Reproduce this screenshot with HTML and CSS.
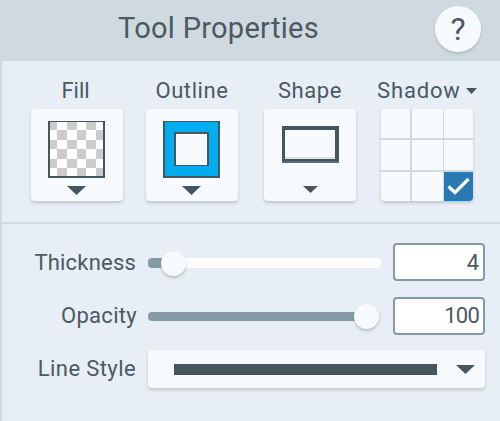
FILE: index.html
```html
<!DOCTYPE html>
<html lang="en">
<head>
<meta charset="utf-8">
<title>Tool Properties</title>
<link rel="stylesheet" href="styles.css">
</head>
<body>
<main class="panel">
  <header class="header">
    <h1 class="title">Tool Properties</h1>
    <button class="help">?</button>
  </header>
  <section class="swatches">
    <div class="tool">
      <span class="label label-fill">Fill</span>
      <button class="card" aria-label="Fill">
        <svg width="92" height="92" viewBox="0 0 92 92" shape-rendering="crispEdges">
          <path fill="#465660" d="M17 12h57v57H17z"/>
          <path fill="#fff" d="M19 13h53v54H19z"/>
          <path fill="#ccc" d="M19 13h7v8h-7zM36 13h10v8H36zM55 13h10v8H55zM26 21h10v10H26zM46 21h9v10h-9zM65 21h7v10h-7zM19 31h7v9h-7zM36 31h10v9H36zM55 31h10v9H55zM26 40h10v10H26zM46 40h9v10h-9zM65 40h7v10h-7zM19 50h7v9h-7zM36 50h10v9H36zM55 50h10v9H55zM26 59h10v8H26zM46 59h9v8h-9zM65 59h7v8h-7z"/>
          <path fill="#465660" shape-rendering="auto" d="M36 77h19l-9.500 9z"/>
        </svg>
      </button>
    </div>
    <div class="tool">
      <span class="label label-outline">Outline</span>
      <button class="card" aria-label="Outline">
        <svg width="92" height="92" viewBox="0 0 92 92" shape-rendering="crispEdges">
          <path fill="#465660" d="M17 12h57v57H17z"/>
          <path fill="#00aeef" d="M19 13h53v54H19z"/>
          <path fill="#465660" d="M28 23h35v34H28z"/>
          <path fill="#f6fafd" d="M30 25h31v31H30z"/>
          <path fill="#465660" shape-rendering="auto" d="M36 77h19l-9.500 9z"/>
        </svg>
      </button>
    </div>
    <div class="tool">
      <span class="label label-shape">Shape</span>
      <button class="card" aria-label="Shape">
        <svg width="92" height="92" viewBox="0 0 92 92" shape-rendering="crispEdges">
          <path fill="#465660" d="M18 17h57v35H18z"/>
          <path fill="#5d6b74" d="M18 52h57v2H18z"/>
          <path fill="#f6fafd" d="M21 21h50v27H21z"/>
          <path fill="#dde4e7" d="M21 48h50v2H21z"/>
          <path fill="#465660" shape-rendering="auto" d="M39 77h15l-7.500 7z"/>
        </svg>
      </button>
    </div>
    <div class="tool">
      <span class="label label-shadow">Shadow<svg class="caret" width="11" height="6" viewBox="0 0 11 6"><path fill="#465660" d="M0 0h11L5.500 6z"/></svg></span>
      <div class="shadow-grid">
        <i></i><i></i><i></i>
        <i></i><i></i><i></i>
        <i></i><i></i><i class="checked"><svg width="29" height="29" viewBox="0 0 29 29"><path d="M4.500 14.500 11 20.500 24.500 7" fill="none" stroke="#fff" stroke-width="3.200"/></svg></i>
      </div>
    </div>
  </section>
  <section class="settings">
    <div class="name"><span class="label label-thick">Thickness</span></div>
    <div class="slider thick"><b></b></div>
    <div class="value">4</div>
    <div class="name"><span class="label label-opacity">Opacity</span></div>
    <div class="slider opacity"><b></b></div>
    <div class="value hundred">100</div>
    <div class="name"><span class="label label-line">Line Style</span></div>
    <button class="select" aria-label="Line style"><span class="stroke"></span><svg width="19" height="9" viewBox="0 0 19 9"><path fill="#465660" d="M0 0h19L9.500 9z"/></svg></button>
  </section>
</main>
</body>
</html>
```
FILE: styles.css
```css
* { box-sizing: border-box; }
body { margin: 0; background: #e7eef5; color: #4b5963; font-family: Roboto, "Liberation Sans", sans-serif; }
button { padding: 0; border: 0; font: inherit; color: inherit; }
svg { display: block; }
.panel { width: 500px; height: 421px; border-left: 2px solid #cfdae0; overflow: hidden; }
.header { display: flex; align-items: flex-start; height: 61px; background: #cfdae0; padding-left: 116px; }
.title { margin: 10px 0 0; width: 317px; font-size: 29px; line-height: 36px; font-weight: 400; letter-spacing: 0.28px; white-space: nowrap; }
.help { width: 46px; height: 46px; margin-top: 6px; border-radius: 50%; background: #f6fafd; box-shadow: 0 2px 3px rgba(70, 86, 96, .22); font-size: 32px; line-height: 46px; }
.swatches { display: grid; grid-template-columns: 92px 92px 92px 92px; column-gap: 23px; height: 163px; padding: 15px 0 0 29px; border-bottom: 2px solid #cfdae0; }
.tool:nth-child(3) { margin-left: 3px; }
.tool:nth-child(4) { margin-left: 5px; }
.tool { width: 92px; }
.label { display: block; height: 33px; line-height: 29px; font-size: 22px; white-space: nowrap; }
.swatches .label { display: flex; justify-content: center; }
.swatches .label-fill { padding-right: 3px; }
.label-outline { letter-spacing: 0.6px; }
.label-shape { letter-spacing: 0.6px; }
.swatches .label-shadow { justify-content: flex-start; margin-left: -4px; letter-spacing: 0.85px; }
.caret { margin: 12px 0 0 5px; flex: none; }
.card { display: block; width: 92px; height: 92px; border-radius: 4px; background: #f6fafd; box-shadow: 0 2px 3px rgba(70, 86, 96, .25); }
.shadow-grid { display: grid; grid-template: 29px 30px 29px / 31px 32px 29px; row-gap: 2px; width: 92px; height: 92px; border-radius: 4px; overflow: hidden; background: #cfdae0; box-shadow: 0 2px 3px rgba(70, 86, 96, .25); }
.shadow-grid i { background: #f6fafd; }
.shadow-grid i:nth-child(3n+1) { margin-right: 2px; }
.shadow-grid i:nth-child(3n+2) { margin-right: 1px; }
.shadow-grid .checked { background: #2a7ab2; }
.settings { display: grid; grid-template-columns: 134px 233px 92px; grid-template-rows: 38px 38px 36px; column-gap: 12px; row-gap: 16px; padding: 19px 0 0; align-items: center; }
.settings .label { height: 38px; line-height: 38px; }
.name { display: flex; justify-content: flex-end; }
.label-thick { letter-spacing: 0.2px; padding-top: 1px; }
.label-opacity { letter-spacing: 0.3px; margin-right: -1px; }
.label-line { letter-spacing: 0.4px; }
.slider { display: flex; align-items: center; height: 10px; border-radius: 4px; }
.slider b { width: 25px; height: 25px; border-radius: 50%; background: #f6fafd; box-shadow: 0 2px 3px rgba(70, 86, 96, .3); }
.thick { margin-top: 2px; padding-left: 13px; background: linear-gradient(90deg, #849aa5 25px, #fff 25px); }
.opacity { height: 9px; padding-left: 206px; background: linear-gradient(90deg, #849aa5 218px, transparent 218px); }
.value { height: 38px; padding-right: 4px; border: 2px solid #849aa5; border-radius: 4px; background: #fff; font-size: 22px; line-height: 36px; text-align: right; }
.hundred { line-height: 34px; letter-spacing: -0.8px; }
.select { grid-column: 2 / 4; display: flex; align-items: center; height: 38px; padding-left: 26px; border-radius: 4px; background: #f6fafd; box-shadow: 0 2px 3px rgba(70, 86, 96, .25); }
.stroke { width: 263px; height: 11px; margin-right: 19px; background: #465660; }
```
